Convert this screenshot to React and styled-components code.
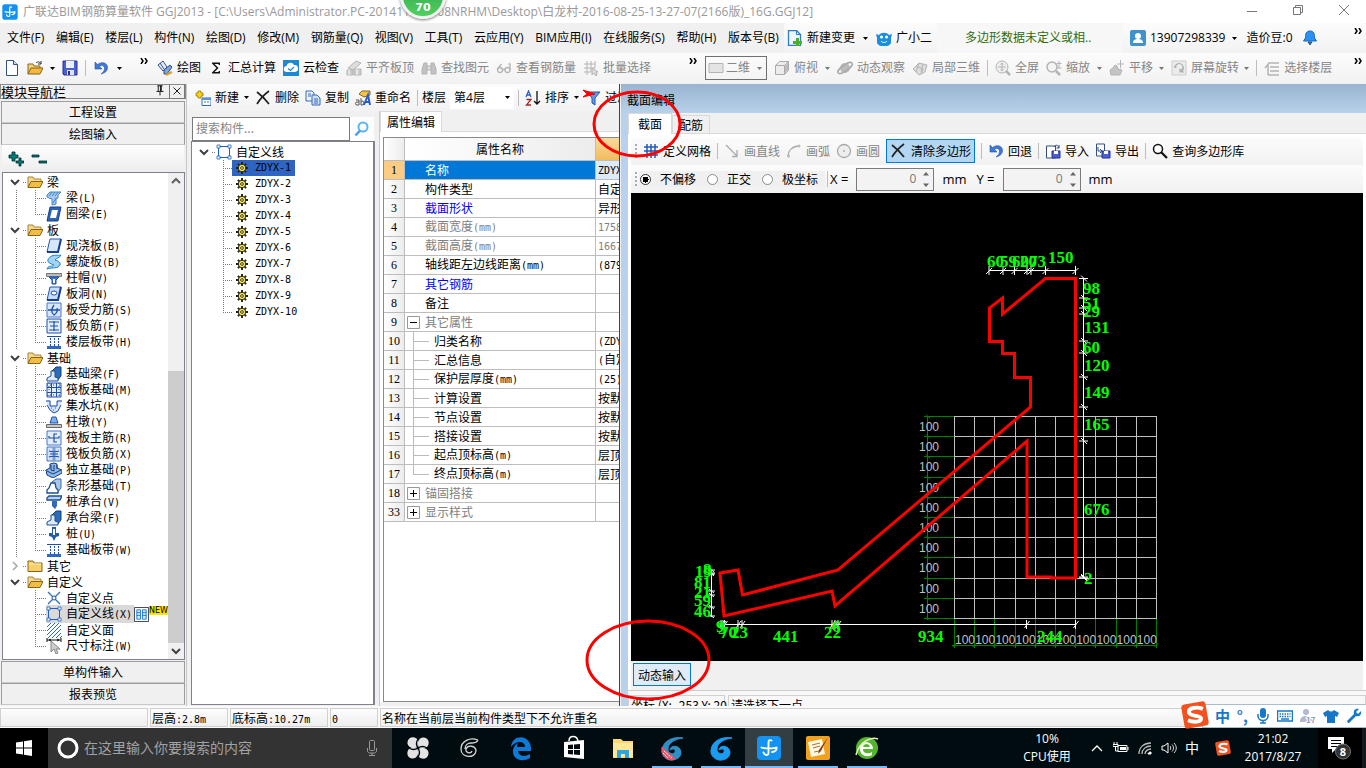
import React from "react";
import styled, { createGlobalStyle, css } from "styled-components";

const UI = `"Open Sans", "Noto Sans CJK SC", sans-serif`;
const SONG = `"Noto Sans CJK SC", sans-serif`;

const Global = createGlobalStyle`
  * { box-sizing: border-box; }
  body { margin: 0; background: #f0f0f0; font-family: ${UI}; font-size: 12px; line-height: 16px; color: #000; }
  button, input, select { font: inherit; color: inherit; margin: 0; padding: 0; border: 0; background: none; border-radius: 0; outline: 0; }
  ul { list-style: none; margin: 0; padding: 0; }
  svg { display: block; flex: none; }
`;

/* ---------- icons, drawn on a 16 x 16 grid ---------- */
const B = "#1f4fa8";
const L = "#a9c8f2";
const G = "#b4b4b4";
const icons = {
  newDoc: <><path d="M2.500.5h7l4 4v11h-11z" fill="#fff" stroke="#33507f" /><path d="M9.500.5v4h4" fill="#c9dcf7" stroke="#33507f" /></>,
  open: <><path d="M1 14V4h5l1 2h6v2" fill="#f6d27a" stroke="#8a6414" /><path d="M1 14l3-6h12l-3 6z" fill="#f4b73f" stroke="#8a6414" /><path d="M9 3c2-2 4-1 5 1m0-3v3h-3" fill="none" stroke="#333" /></>,
  save: <><path d="M1 1h14v14H2L1 14z" fill="#4a5fd0" stroke="#2a2f96" /><path d="M4 1h8v7H4z" fill="#e9effc" /><path d="M5 10h7v5H5z" fill="#dfe3f5" /><path d="M6 11h2v4H6z" fill="#2a2f96" /></>,
  undo: <path d="M2 2v7h7L6.500 6.500C9 4.500 12 6 11.500 9c-.3 2-1.500 3.500-3.500 5 4-1 6.500-3 6.500-6.500C14.500 3 9 1 4.500 4.500z" fill="#3f78d8" stroke="#2454a8" strokeWidth=".6" />,
  pencil: <><path d="M1 5l5-4 4 6-4 4z" fill="#dfe9f7" stroke="#34558b" /><path d="M3 3l4 6" stroke="#34558b" /><path d="M7 10l6-5 2 2-5 7H7z" fill="#7fa6dd" stroke="#2b4b82" /><path d="M9 15l6-3" stroke="#e0a020" strokeWidth="2" /></>,
  sigma: <path d="M12 5V2.500H4v1L8.500 8 4 12.500v1h8V11h-1l-.7 1H6.500L10.500 8 6.500 4h3.800l.7 1z" fill="#111" />,
  cloud: <><path d="M0 0h16v16H0z" fill="#1e88d2" /><path d="M4 12a3 3 0 01-.5-6A4 4 0 0111 5a3.500 3.500 0 011 7z" fill="#fff" /><path d="M5 8.500l2.500 2L11 7" fill="none" stroke="#1e88d2" strokeWidth="1.300" /></>,
  slab: <><path d="M2 8l8-7 5 2-8 7z" fill="#ddd" stroke={G} /><path d="M1 10h6v5H1zM8 9h7v6H8z" fill="#ccc" stroke={G} /><path d="M3 10v5M11 9v6" stroke="#fff" /></>,
  binoc: <><path d="M1 14V9l2-6h3v11zM15 14V9l-2-6h-3v11z" fill="#c2c2c2" stroke={G} /><path d="M6 6h4v4H6z" fill="#ddd" stroke={G} /></>,
  glasses: <><circle cx="4" cy="10" r="2.500" fill="none" stroke={G} strokeWidth="1.300" /><circle cx="11.500" cy="10" r="2.500" fill="none" stroke={G} strokeWidth="1.300" /><path d="M6.500 9.500H9M1.500 9l4-5M14 10V4h-1.500" stroke={G} fill="none" strokeWidth="1.300" /></>,
  batch: <><path d="M1 4h11M1 8h11M1 12h7M4 1v14M8 1v11M12 1v7" stroke={G} /><path d="M9 8v7l2-2 2 3 1-1-1-3h2z" fill="#ddd" stroke={G} /></>,
  flat: <path d="M1 3.500h14v9H1z" fill="#e4e4e4" stroke={G} />,
  cube: <><path d="M1.500 5.500l4-4h9v9l-4 4h-9z" fill="#ececec" stroke="#aaa" /><path d="M1.500 5.500h9v9M10.500 5.500l4-4" fill="none" stroke="#aaa" /><path d="M11 6l3-3v7l-3 3z" fill="#bbb" /></>,
  orbit: <><circle cx="8" cy="8" r="5" fill="#bbb" /><ellipse cx="8" cy="8" rx="8.500" ry="3" transform="rotate(-35 8 8)" fill="none" stroke="#aaa" strokeWidth="1.500" /></>,
  part3d: <><path d="M1 9l6-6 8 2-2 7-6 3z" fill="#ddd" stroke={G} /><path d="M4 6l7 3-2 5M7 3l-3 9M11 4l-2 8" fill="none" stroke={G} /></>,
  full: <><circle cx="7" cy="7" r="6" fill="#efefef" stroke={G} /><path d="M7 3v8M3 7h8M5.500 4.500L7 3l1.500 1.500M5.500 9.500L7 11l1.500-1.500" fill="none" stroke={G} /><path d="M11 11l4 4" stroke={G} strokeWidth="2.500" /></>,
  zoomI: <><circle cx="6" cy="7" r="5" fill="#f4f4f4" stroke={G} strokeWidth="1.500" /><path d="M10 11l4 4" stroke={G} strokeWidth="2.500" /><path d="M13 1v7M10.500 3.500h5M10.500 8h5" stroke={G} /></>,
  pan: <><path d="M2 15l-1-5 3-2 2-3 2 1 1 3 4 1-2 5z" fill="#c4c4c4" stroke={G} /><path d="M11.500 0v8M8 4h7" stroke={G} /></>,
  rotate: <><path d="M1 1h14v14H1z" fill="#ececec" stroke="#ccc" /><path d="M3 8a5 5 0 119 3l1.500 1.500H8.500V8L10 9.500A3 3 0 105.500 8z" fill="#b0b0b0" /></>,
  floors: <path d="M4 3h11M6 7h9M6 11h9M4 15h11M1 8l4-5M4 4v11" fill="none" stroke={G} strokeWidth="1.500" />,
  add: <><path d="M3 1h3v2h2v3H6v2H3V6H1V3h2z" fill="#f7d21e" stroke="#8c6d00" strokeWidth=".7" /><path d="M7 8h9v7.500H7z" fill="#fff" stroke="#3669b8" /><path d="M7 8h9v2H7z" fill="#5b92dd" /><path d="M9 12h2m1 0h2" stroke="#3669b8" /></>,
  del: <path d="M2 2c4 3 8 7 12 12M14 1C10 4 5 9 2 14" stroke="#222" strokeWidth="1.700" fill="none" />,
  copy: <><path d="M1 1h6l2 2v8H1z" fill="#eaf2fd" stroke="#3669b8" /><path d="M7 5h5l3 3v7H7z" fill="#cfe1fa" stroke="#3669b8" /><path d="M9 9h4m-4 2h4m-4 2h4M3 4h3M3 6h3" stroke="#3669b8" /></>,
  rename: <><path d="M4 4l3-3h8v4L9 7z" fill="#f0c54a" stroke="#8a6414" /><path d="M9 15l4-10 2 10m-5-3h5" stroke="#2c5fc4" strokeWidth="2" fill="none" /><path d="M1 10h3v5H2a1.500 1.500 0 010-3h2M6 8v7h1a2 2 0 000-4H6" stroke="#555" fill="none" /></>,
  sort: <><path d="M1 7l2.500-6L6 7M2 5h3" stroke="#2c5fc4" strokeWidth="1.300" fill="none" /><path d="M1.500 9.500H6L1.500 15H6" stroke="#a02828" strokeWidth="1.300" fill="none" /><path d="M12 1v13m-3-3l3 3 3-3" stroke="#111" strokeWidth="1.300" fill="none" /></>,
  filter: <path d="M2 2h13l-5 6v7l-3-2V8z" fill="#5e9bea" stroke="#2b55a5" />,
  find: <><circle cx="9" cy="6" r="4.500" fill="#fff" stroke="#58b5f2" strokeWidth="2" /><path d="M6 9.500l-4.500 5" stroke="#4e9ede" strokeWidth="2.500" /></>,
  grid: <path d="M1 4h14M1 8h14M1 12h14M4 1v14M8 1v14M12 1v14" stroke="#2558b8" strokeWidth="1.500" />,
  line: <path d="M2 2l11 11M13 7v6.500H8" stroke="#aaa" strokeWidth="1.300" fill="none" />,
  arc: <><path d="M2 14C2 7 7 3 13 3" fill="none" stroke="#aaa" strokeWidth="1.300" /><circle cx="2.500" cy="13" r="1.500" fill="#bbb" /><circle cx="13" cy="3" r="1.500" fill="#bbb" /></>,
  circle: <><circle cx="8" cy="8" r="6.500" fill="#eee" stroke="#aaa" strokeWidth="1.300" /><circle cx="8" cy="8" r="1" fill="#aaa" /></>,
  import: <><path d="M1.500 3v12h9V3z" fill="#fff" stroke="#33507f" /><path d="M7 8h8v7H7z" fill="#4a5fd0" stroke="#2a2f96" /><path d="M9 8h4v3H9z" fill="#fff" /><path d="M9 4c2-3 4-2 5 1m0-3v3h-2.500" fill="none" stroke="#33507f" /></>,
  export: <><path d="M1.500 1h8v12h-8z" fill="#fff" stroke="#33507f" /><path d="M7 8h8v7H7z" fill="#4a5fd0" stroke="#2a2f96" /><path d="M9 8h4v3H9z" fill="#fff" /><path d="M3 4v4h3M5 6l2 2-2 2" fill="none" stroke="#33507f" /></>,
  query: <><circle cx="6" cy="6" r="4.500" fill="#fff" stroke="#111" strokeWidth="1.500" /><path d="M9 9l6 6" stroke="#111" strokeWidth="2.200" /></>,
  docPlus: <><path d="M1.500.5h8l4 4v11h-12z" fill="#eef6ff" stroke="#2d7cc4" strokeWidth="1.300" /><path d="M9.500.5v4h4" fill="none" stroke="#2d7cc4" /><path d="M9 8h3v3h3v3h-3v2H9v-2H6v-3h3z" fill="#4caf2a" /></>,
  mascot: <><path d="M0 4l3 1c2-3 8-3 10 0l3-1-1 4v5c-1 2-3 3-4 3H5c-1 0-3-1-4-3V8z" fill="#1c8ee0" /><circle cx="5.500" cy="7" r="1.500" fill="#fff" /><circle cx="10.500" cy="7" r="1.500" fill="#fff" /><path d="M5 11c2 2 4 2 6 0" stroke="#fff" fill="none" /></>,
  user: <><rect width="16" height="16" rx="2" fill="#3f93cc" /><circle cx="8" cy="6" r="3" fill="#fff" /><path d="M3 13c0-3 2-4 5-4s5 1 5 4z" fill="#fff" /></>,
  bell: <><path d="M8 1c4 0 4.500 3 4.500 7l2 3h-13l2-3C3.500 4 4 1 8 1z" fill="#2a90f5" stroke="#1766bd" /><path d="M6 12h4l-2 3z" fill="#2a90f5" stroke="#111" strokeWidth=".6" /></>,
  folderOpen: <><path d="M1 13V3h5l1 2h7v3" fill="#f4d991" stroke="#a88434" /><path d="M1 13.500l3-6h12l-3 6z" fill="#f2bd45" stroke="#8a6414" /></>,
  folder: <><path d="M1 13.500V3h5l1 2h8v8.500z" fill="#f6cf69" stroke="#8a6414" /><path d="M2 6h12" stroke="#fff0bd" /></>,
  beam: <><path d="M1 5l3-3h11l-3 3v3l-2 1v5l-4 1V9L3 8 1 7z" fill={L} stroke="#3d85c8" /><path d="M3 6l3-4M6 6l3-4M9 6l3-4M7 13l3-5" stroke="#3d85c8" /></>,
  ring: <><path d="M4 1h11l-3 14H1z" fill="#2d64b8" stroke="#183f86" /><path d="M6 4h6l-2 8H4z" fill="#fff" /></>,
  plate: <><path d="M4 1h11l-3 13H1z" fill="#d6e7fc" stroke="#2456a8" /><path d="M1 14h11l3-13" fill="none" stroke="#163f8d" strokeWidth="2" /></>,
  spiral: <path d="M4 3c4-3 8-1 11-2-1 3-5 3-6 5 3 1 6 2 5 5-2 4-7 2-13 4 1-4 6-2 7-4C6 10 1 9 2 6c0-1 1-2 2-3z" fill="#9fd4f4" stroke="#2382c4" />,
  cap: <><path d="M.500 3.500h15v3H.5z" fill="#bdbdbd" stroke="#777" /><path d="M3 7h10l-3 3v4H6v-4z" fill="#3c7dd0" stroke={B} /><path d="M7 9h2v4H7z" fill="#fff" /></>,
  hole: <><path d="M4 1h11l-3 13H1z" fill="#c7dcf8" stroke="#2456a8" /><path d="M1 14h11l3-13" fill="none" stroke="#163f8d" strokeWidth="2" /><ellipse cx="8" cy="7" rx="3" ry="2" fill="#fff" stroke={B} /></>,
  rebarS: <><path d="M1 1h14v14H1z" fill="#d8e6fb" stroke="#4a77c4" /><path d="M2 8h12M8 3c-3 4-3 8 0 10 3-2 4-4 3-7" fill="none" stroke={B} strokeWidth="1.300" /></>,
  rebarF: <><path d="M1 1h14v14H1z" fill="#e2edfd" stroke={B} /><path d="M8 3v10M3 4h10M3 12h10M4 8h8" stroke={B} strokeWidth="1.200" /></>,
  rebarX: <><path d="M1 1h14v14H1z" fill="#d2e1f8" stroke="#4a77c4" /><path d="M8 1v14" stroke="#7f9fd4" strokeWidth="3" /><path d="M3 5c2 1 8 1 10 0M3 11c2-1 8-1 10 0M4 8h8" stroke={B} strokeWidth="1.200" fill="none" /></>,
  band: <><path d="M1 2.500h14" stroke={B} /><path d="M4.500 4v8M8.500 4v8M12.500 4v8" stroke={B} strokeDasharray="2 1" /><path d="M1 12h14v3H1z" fill="#2e68c2" /></>,
  fbeam: <><path d="M6 5l4-4h5v9l-4 5z" fill="#2e6cb4" stroke="#163f7c" /><path d="M1 15v-3l4-2V5h4v6l3 1v3z" fill="#dbe9fb" stroke="#1d4d94" /></>,
  raft: <><path d="M1 1h14v14H1z" fill="#e2edfd" stroke={B} /><path d="M5.500 1v14M10.500 1v14M1 5.500h14M1 10.500h14" stroke={B} /><path d="M3 1v14M13 1v14M1 3h14M1 13h14" stroke={B} strokeDasharray="1 2" /></>,
  pit: <><path d="M0 2h5v5h6V2h5l-2 8-4 5H6l-4-5z" fill="#d4e5fb" /><path d="M0 3h4v5h7V3h5M1 7l3 5 4 3 4-2 3-6" fill="none" stroke={B} /><path d="M5 10h1m3 0h1m-3 2h1" stroke={B} /></>,
  pier: <><path d="M6 3h4l2 6H4z" fill="#7faee8" stroke={B} /><path d="M.500 10.500h15v3H.5z" fill="#c8c8c8" stroke="#666" /></>,
  mainbar: <><path d="M1 1h14v14H1z" fill="#e2edfd" stroke="#4a77c4" /><path d="M3 6v2h10V6M11 4H8v8h3" fill="none" stroke={B} strokeWidth="1.200" /></>,
  indep: <><path d="M0 8l4-2V2l4-1 3 1v4l5 2v3l-9 5-6-3z" fill="#8db9ea" stroke="#143f7c" /><path d="M5 3v5l3 1V3M1 9l6 3 8-4M11 3v4" fill="none" stroke="#143f7c" /></>,
  strip: <><path d="M6 4l4-3h5v9l-4 5z" fill="#a9c8e8" stroke="#3b6ba8" /><path d="M1 15v-3l2-2 2-5h4l1 5 2 2v3z" fill="#fff" stroke="#1d4d94" strokeWidth="1.300" /></>,
  capP: <><path d="M1 4l2-2h13l-2 4H1z" fill="#b7d3f4" stroke="#1d4d94" strokeWidth="1.300" /><path d="M6 7h5v5l-2 3-3-3z" fill="#3169b5" /></>,
  pile: <><path d="M6 1h4v6h3v3l-3 1-2 4-2-4-3-1V7h3z" fill="#245ca8" /><path d="M7 3h2v6H7z" fill="#fff" /></>,
  point: <><path d="M2 2l12 12M14 2L2 14" stroke="#2b72b8" strokeWidth="1.300" /><circle cx="8" cy="8" r="2" fill="#fff" stroke={B} /></>,
  lineBox: <><path d="M2.500 2.500h11v11h-11z" fill="none" stroke="#1d5fc4" /><path d="M1 1h3v3H1zM12 1h3v3h-3zM1 12h3v3H1zM12 12h3v3h-3z" fill="#fff" stroke="#1d5fc4" strokeWidth=".8" /></>,
  face: <path d="M1 5l4-4M1 9l8-8M1 13L13 1M2 16L15 3M6 16l9-9M10 16l5-5M14 16l2-2" stroke="#2b63c8" strokeWidth="1" />,
  dim: <><path d="M1 2h14M1 0v4M15 0v4M5 1l-2 1 2 1M11 1l2 1-2 1" stroke="#111" fill="none" /><path d="M5 3v11l3-3 2 5 2-1-2-4h4z" fill="#ccc" stroke="#888" /></>,
  cols: <><path d="M.500.5h15v15H.5z" fill="#fff" stroke="#3a3a52" /><path d="M3 3h4v10H3zM9 3h4v10H9z" fill="#d3e9ff" stroke="#1f7ad4" /><path d="M3 6h4m-4 3h4m2-3h4M9 9h4" stroke="#1f7ad4" /></>,
  gear: <><path d="M8 0v16M0 8h16M2.500 2.500l11 11M13.500 2.500l-11 11" stroke="#222" strokeWidth="2.600" /><circle cx="8" cy="8" r="5" fill="#ffe92e" stroke="#222" strokeWidth="1.300" /><circle cx="8" cy="8" r="1.800" fill="#fff" stroke="#222" strokeWidth="1.200" /></>,
  chevD: <path d="M4 6l4 4 4-4" fill="none" stroke="#404040" strokeWidth="2" />,
  chevU: <path d="M4 10l4-4 4 4" fill="none" stroke="#606060" strokeWidth="2" />,
  chevR: <path d="M6 4l4 4-4 4" fill="none" stroke="#a6a6a6" strokeWidth="1.500" />,
  plus2: <><path d="M4 1h3v3h3v3H7v3H4V7H1V4h3z" fill="#007d78" stroke="#002a28" strokeWidth=".8" /><path d="M11 7h2v3h3v2h-3v3h-2v-3H8v-2h3z" fill="#007d78" stroke="#002a28" strokeWidth=".8" /></>,
  minus2: <path d="M1 4h7v2H1zM8 10h8v2H8z" fill="#007d78" stroke="#002a28" strokeWidth=".8" />,
  pin: <path d="M5 2h6M6 2v6M9.500 2v6M8.500 2v6M4 8.500h8M8 9v4" stroke="#000" fill="none" />,
  close: <path d="M4 4l8 8M12 4l-8 8" stroke="#000" />,
  chevW: <path d="M3 11l5-5 5 5" fill="none" stroke="#fff" strokeWidth="1.300" />,
  battery: <><path d="M5 5.500h9v6H5z" fill="none" stroke="#fff" /><path d="M7 7h6v3H7z" fill="#fff" /><path d="M15 7v3" stroke="#fff" /><path d="M1 2v2m3-2v2M0 4.500h5v2H0zM2.500 7v4H5" stroke="#fff" fill="none" /></>,
  wifi: <><path d="M2 14C2 7 7 3 14 3M5 14c0-5 4-8 9-8M8 14c0-3 3-5 6-5" stroke="#bbb" fill="none" strokeWidth="1.300" /><path d="M11 14c0-1 1-2 3-2v2z" fill="#fff" stroke="#fff" /></>,
  sound: <><path d="M1 6h2l4-3v10l-4-3H1z" fill="none" stroke="#fff" /><path d="M9 6c1 1 1 3 0 4M11 4.500c2 2 2 5 0 7M13 3c3 3 3 7 0 10" stroke="#ddd" fill="none" /></>,
  sogou: <><rect x="1" y="1" width="14" height="14" rx="2" fill="#f4511e" transform="rotate(-10 8 8)" /><path d="M12.500 4.500C9 3 4 4 4.500 6.500S11.500 8 11.500 10s-4 2.500-7.500 1" stroke="#fff" strokeWidth="2.200" fill="none" /></>,
  mic: <><rect x="5" y="0" width="6" height="10" rx="3" fill="#1878c8" /><path d="M3 6v2c0 6 10 6 10 0V6M8 12v3M5 15h6" stroke="#1878c8" strokeWidth="1.500" fill="none" /></>,
  micLine: <><rect x="5.500" y=".5" width="5" height="10" rx="1" fill="none" stroke="#999" /><path d="M3.500 8v3c0 1 1 2 2 2h5c1 0 2-1 2-2V8M8 13v2.500M5 15.500h6" stroke="#999" fill="none" /></>,
  keyb: <><path d="M.500 3h15v10H.5z" fill="#fff" stroke="#1878c8" strokeWidth="1.500" /><path d="M2.500 6h11M2.500 8.500h11" stroke="#1878c8" strokeWidth="1.500" strokeDasharray="1.500 1" /><path d="M4 11h8" stroke="#1878c8" strokeWidth="1.500" /></>,
  person: <><circle cx="6" cy="4" r="3" fill="#b0b9cf" /><path d="M0 14c0-5 3-6 6-6s6 1 6 6z" fill="#b0b9cf" /><text x="6" y="15" fontSize="8" fontWeight="700" fill="#8f9bb8" stroke="#fff" strokeWidth="2" paintOrder="stroke">17</text></>,
  shirt: <path d="M5 2c2 2 4 2 6 0l5 3-2 4-2-1v7H4V8L2 9 0 5z" fill="#1878c8" />,
  wrench: <path d="M2 15l-1-2 7-7c-1-3 1-6 5-5l-3 3 2 2 3-3c1 4-2 6-5 5l-7 7z" fill="#1878c8" />,
};

const Icon = ({ n, s = 16 }) => (
  <svg width={s} height={s} viewBox="0 0 16 16" aria-hidden="true">{icons[n]}</svg>
);

const Arrow = ({ c = "#000" }) => (
  <svg width="5" height="3" viewBox="0 0 5 3" aria-hidden="true"><path d="M0 0h5L2.500 3z" fill={c} /></svg>
);
const More = () => (
  <svg width="8" height="6" viewBox="0 0 8 6" aria-hidden="true"><path d="M1 0l2 3-2 3M5 0l2 3-2 3" fill="none" stroke="#000" strokeWidth="1.500" /></svg>
);

/* ---------- text with half-width latin ---------- */
const Half = styled.span`
  font-family: "DejaVu Sans Mono", monospace;
  font-size: 10px;
`;
const Song = ({ children }) =>
  children.split(/([\x20-\x7e]+)/).filter(Boolean).map((t, i) =>
    /^[\x20-\x7e]/.test(t) ? <Half key={i}>{t}</Half> : t
  );

/* ---------- frame ---------- */
const Page = styled.div`
  position: relative;
  min-height: 100vh;
  display: flex;
  flex-direction: column;
  overflow: hidden;
`;
const TitleBar = styled.header`
  display: flex;
  align-items: center;
  height: 23px;
  padding: 0 14px 0 1px;
  background: #fff;
  color: #999;
  white-space: pre;
`;
const TitleText = styled.span`
  flex: 1;
  padding-left: 4px;
`;
const WindowButtons = styled.div`
  display: flex;
  gap: 30px;
  padding-bottom: 3px;
`;
const Bar = styled.div`
  display: flex;
  align-items: center;
  height: ${(p) => p.$h}px;
  background: ${(p) => (p.$plain ? "#f0f0f0" : "linear-gradient(#fdfdfd, #f1f1f1)")};
  white-space: nowrap;
`;
const Menu = styled.nav`
  display: flex;
  justify-content: space-between;
  padding: 0 5px 0 7px;
  width: 784px;
`;
const MenuButton = styled.button`
  white-space: nowrap;
`;
const Cluster = styled.div`
  display: flex;
  align-items: center;
  height: 100%;
  gap: ${(p) => p.$gap || 7}px;
  padding: 0 ${(p) => p.$r || 0}px 0 ${(p) => p.$l || 0}px;
  ${(p) => (p.$w ? css`width: ${p.$w}px;` : "flex: 1;")}
  flex-shrink: 0;
  min-width: 0;
  border-radius: 3px;
  background: linear-gradient(#fcfcfc, #f2f2f2);
`;
const Push = styled.span`
  flex: 1;
`;
const High = styled.span`
  padding-bottom: 14px;
`;
const Tool = styled.button`
  display: flex;
  align-items: center;
  gap: 4px;
  height: 24px;
  flex: none;
  white-space: nowrap;
  color: ${(p) => (p.$off ? "#868686" : "#000")};
  ${(p) => p.$boxed && css`border: 1px solid #707070; padding: 0 4px 0 2px; gap: 2px;`}
  ${(p) => p.$active && css`border: 1px solid #0078d7; background: #b3d7f3; padding: 0 3px; gap: 5px;`}
`;
const Tail = styled.span`
  padding-left: ${(p) => p.$l}px;
`;
const Sep = styled.span`
  flex: none;
  width: 1px;
  height: 16px;
  background: #bdbdbd;
`;
const Notice = styled.span`
  width: 186px;
  padding-left: 28px;
  background: #f7f7f7;
  line-height: 30px;
  color: #2f6b0c;
`;

const Workspace = styled.main`
  flex: 1;
  display: flex;
  min-height: 0;
  padding-top: 1px;
`;

/* ---------- navigation ---------- */
const Nav = styled.aside`
  width: 187px;
  flex: none;
  display: flex;
  flex-direction: column;
  padding-bottom: 1px;
  border-right: 1px solid #c8c8c8;
  font-family: ${SONG};
`;
const NavHead = styled.div`
  display: flex;
  align-items: center;
  height: 15px;
  margin-bottom: 2px;
  border: 1px solid #8c8c8c;
  font-size: 13px;
`;
const HeadIcons = styled.span`
  display: flex;
  margin-left: auto;
  gap: 2px;
`;
const CloseBox = styled.button`
  border: 1px solid #777;
  border-width: 0 1px 1px 1px;
`;
const NavButton = styled.button`
  height: 22px;
  margin: 0 1px;
  border: 1px solid #9c9c9c;
  border-bottom-color: #c8c8c8;
  background: #f0f0f0;
`;
const NavTools = styled.div`
  display: flex;
  align-items: center;
  gap: 7px;
  height: 27px;
  margin: 0 2px;
  padding-left: 6px;
  background: linear-gradient(#fefefe, #ededed);
`;
const TreeBox = styled.div`
  flex: 1;
  display: flex;
  margin: 0 1px 1px 2px;
  border: 1px solid #7f828c;
  background: #fff;
`;
const Tree = styled.ul`
  flex: 1;
  min-width: 0;
  overflow: hidden;
  padding-top: 1px;
`;
const Row = styled.li`
  display: flex;
  align-items: center;
  height: 16px;
  white-space: nowrap;
`;
const dotsV = "repeating-linear-gradient(to bottom, #777 0 1px, transparent 1px 2px)";
const dotsH = "repeating-linear-gradient(to right, #777 0 1px, transparent 1px 2px)";
const Trunk = styled.span`
  flex: none;
  width: 19px;
  height: 16px;
  margin-left: 13px;
  background: ${(p) => (p.$off ? "none" : `${dotsV} 0 0 / 1px 100% no-repeat`)};
`;
const Elbow = styled.span`
  flex: none;
  width: 11px;
  height: 16px;
  background: ${(p) => `${dotsV} 0 0 / 1px ${p.$last ? "50%" : "100%"} no-repeat, ${dotsH} 0 50% / 100% 1px no-repeat`};
`;
const Stub = styled.span`
  width: 4px;
  height: 16px;
  background: ${dotsH} 0 50% / 100% 1px no-repeat;
`;
const Chevron = styled.span`
  padding-left: 4px;
`;
const Label = styled.span`
  padding: 0 2px 0 4px;
`;
const Picked = styled.span`
  display: flex;
  align-items: center;
  flex: none;
  background: ${(p) => (p.$on ? "#d9d9d9" : "none")};
`;
const NewTag = styled.span`
  align-self: flex-start;
  background: #ffe600;
  font: 8px/9px "DejaVu Sans", sans-serif;
`;
const Scroll = styled.div`
  display: flex;
  flex-direction: column;
  flex: none;
  width: 16px;
  background: #f0f0f0;
`;
const Track = styled.div`
  flex: ${(p) => p.$n};
  background: ${(p) => (p.$thumb ? "#cdcdcd" : "#f0f0f0")};
`;

/* ---------- component list ---------- */
const Middle = styled.section`
  width: 433px;
  flex: none;
  display: flex;
  flex-direction: column;
  border-right: 1px solid #3c4654;
  overflow: hidden;
  margin-right: 1px;
`;
const Columns = styled.div`
  flex: 1;
  display: flex;
  min-height: 0;
`;
const ListPane = styled.div`
  width: 184px;
  margin-left: 4px;
  flex: none;
  display: flex;
  flex-direction: column;
  padding-bottom: 1px;
  font-family: ${SONG};
`;
const SearchRow = styled.form`
  display: flex;
  height: 30px;
  padding: 6px 1px 0;
`;
const SearchInput = styled.input`
  width: 158px;
  height: 24px;
  padding: 0 3px 4px;
  border: 1px solid #7a7a7a;
  background: #fff;
  &::placeholder { color: #858585; opacity: 1; }
`;
const SearchButton = styled.button`
  flex: 1;
  display: grid;
  place-items: center;
  background: #fdfdfd;
`;
const ListBox = styled.ul`
  flex: 1;
  padding: 2px 0 0 4px;
  border: 1px solid #7f828c;
  border-right-width: 2px;
  background: #fff;
`;
const ListElbow = styled(Elbow)`
  width: 9px;
  margin-left: 27px;
`;
const ListItem = styled.span`
  display: flex;
  align-items: center;
  height: 16px;
  padding: 0 4px;
  gap: 7px;
  background: ${(p) => (p.$on ? "#2f65c0" : "none")};
`;
const FloorSelect = styled.select`
  width: 50px;
  height: 22px;
  padding-left: 4px;
  appearance: none;
  background: #fff;
`;
const ComboBox = styled.label`
  display: flex;
  flex: none;
  align-items: center;
  gap: 4px;
`;
const ComboFace = styled.span`
  display: flex;
  align-items: center;
  gap: 5px;
  width: 64px;
  background: #fff;
`;

/* ---------- property editor ---------- */
const Props = styled.div`
  flex: 1;
  min-width: 0;
  display: flex;
  flex-direction: column;
  margin-left: 4px;
  padding-bottom: 4px;
  border-left: 1px solid #c9c9c9;
  background: #f0f0f0;
  font-family: ${SONG};
  overflow: hidden;
`;
const TabStrip = styled.div`
  display: flex;
  align-items: flex-end;
  height: 21px;
  border-bottom: 1px solid #d9d9d9;
`;
const Tab = styled.button`
  width: ${(p) => p.$w}px;
  height: ${(p) => (p.$on ? 21 : 18)}px;
  margin-bottom: ${(p) => (p.$on ? -1 : 0)}px;
  border: 1px solid #d9d9d9;
  border-bottom: 0;
  background: ${(p) => (p.$on ? "#fff" : "#f0f0f0")};
`;
const PropBody = styled.div`
  flex: 1;
  padding: 5px 0 0 3px;
  background: #fff;
  overflow: hidden;
`;
const PropFrame = styled.div`
  height: 100%;
  border: 1px solid #8a8a8a;
  border-right: 0;
  overflow: hidden;
`;
const Table = styled.table`
  width: 336px;
  table-layout: fixed;
  border-collapse: separate;
  border-spacing: 0;
`;
const Th = styled.th`
  height: ${(p) => (p.$top ? 23 : 19)}px;
  padding: 0;
  border-right: 1px solid #bdbdbd;
  border-bottom: 1px solid #bdbdbd;
  font-weight: 400;
  background: ${(p) => p.$bg || "linear-gradient(90deg, #fff, #ececec)"};
  ${(p) => !p.$top && css`font-family: "Liberation Serif", serif; line-height: 14px;`}
`;
const Td = styled.td`
  height: 19px;
  padding: 0 0 0 ${(p) => p.$l || 2}px;
  border-right: 1px solid #bdbdbd;
  border-bottom: 1px solid #bdbdbd;
  line-height: 16px;
  white-space: nowrap;
  overflow: hidden;
  color: ${(p) => p.$c || "#000"};
  background: ${(p) => p.$bg || "#fff"};
`;
const Cell = styled.span`
  display: flex;
  align-items: center;
  height: 18px;
  gap: 5px;
`;
const Branch = styled.span`
  width: 16px;
  height: 18px;
  background: linear-gradient(#bbb, #bbb) 0 0 / 1px ${(p) => (p.$last ? "50%" : "100%")} no-repeat, linear-gradient(#bbb, #bbb) 0 50% / 100% 1px no-repeat;
`;

/* ---------- section dialog ---------- */
const Dialog = styled.section`
  flex: 1;
  min-width: 0;
  display: flex;
  flex-direction: column;
  background: #b9d1ea;
  font-family: ${SONG};
`;
const DialogTitle = styled.h2`
  margin: 0;
  height: 29px;
  padding: 8px 0 0 6px;
  font: 400 12px/18px ${UI};
  background: linear-gradient(#99b4d1, #b9d1ea);
`;
const DialogBody = styled.div`
  flex: 1;
  display: flex;
  flex-direction: column;
  margin-left: 7px;
  background: #f0f0f0;
`;
const Sheet = styled.div`
  flex: 1;
  display: flex;
  flex-direction: column;
  padding: 3px 3px 0 3px;
  background: #fff;
`;
const ToolRow = styled.div`
  display: flex;
  align-items: center;
  gap: ${(p) => p.$gap}px;
  height: 28px;
  padding-left: 4px;
  white-space: nowrap;
  background: linear-gradient(#fcfcfc, #f1f1f1);
`;
const Grip = styled.span`
  width: 2px;
  height: 14px;
  background: repeating-linear-gradient(#aaa 0 2px, transparent 2px 4px);
`;
const Radio = styled.label`
  display: flex;
  align-items: center;
  gap: 9px;
  input {
    appearance: none;
    width: 11px;
    height: 11px;
    border: 1px solid #8a8a8a;
    border-radius: 50%;
    background: #fff;
  }
  input:checked {
    border-color: #333;
    background: radial-gradient(#000 0 3px, #fff 3px);
  }
`;
const Radios = styled.div`
  display: flex;
  gap: 11px;
  padding: 0 7px 0 1px;
  background: #f0f0f0;
`;
const NumLabel = styled.label`
  display: flex;
  align-items: center;
  gap: 8px;
  font: 13px/16px ${UI};
`;
const NumBox = styled.span`
  display: flex;
  align-items: center;
  width: 78px;
  height: 23px;
  padding-right: 4px;
  border: 1px solid #7a7a7a;
  background: #f3f3f3;
  color: #777;
  input { width: 59px; text-align: right; font-size: 12px; }
`;
const Spin = styled.svg`
  margin-left: auto;
`;
const Canvas = styled.div`
  flex: 1;
  min-height: 468px;
  overflow: hidden;
  background: #000;
`;
const DialogFoot = styled.div`
  height: 29px;
  padding: 2px;
  background: #f0f0f0;
`;
const DynButton = styled.button`
  width: 58px;
  height: 23px;
  border: 1px solid #0078d7;
  background: #dfebf6;
`;
const DialogStatus = styled.div`
  display: flex;
  gap: 3px;
  height: 16px;
  padding-top: 4px;
  border-top: 1px solid #ccc;
  background: #f8f8f8;
  overflow: hidden;
  span {
    height: 24px;
    padding: 0 2px;
    border: 1px solid #d0d0d0;
    line-height: 18px;
    white-space: nowrap;
  }
  span:first-child { width: 97px; }
  span:last-child { flex: 1; }
`;

/* ---------- status and task bar ---------- */
const StatusBar = styled.footer`
  display: flex;
  gap: 2px;
  height: 22px;
  padding: 2px 0 1px;
  background: #fafafa;
  font-family: ${SONG};
`;
const StatusCell = styled.span`
  ${(p) => (p.$w ? css`width: ${p.$w}px;` : "flex: 1;")}
  padding: 0 1px;
  border: 1px solid #cfcfcf;
  background: linear-gradient(#fdfdfd, #eee);
  line-height: 18px;
  white-space: nowrap;
`;
const TaskBar = styled.footer`
  display: flex;
  height: 40px;
  background: #000c10;
  color: #fff;
`;
const Start = styled.button`
  display: grid;
  place-items: center;
  width: 48px;
  background: #000;
`;
const TaskSearch = styled.label`
  display: flex;
  align-items: center;
  gap: 5px;
  width: 344px;
  padding: 0 12px 0 9px;
  background: #333;
  input { flex: 1; font-size: 14px; line-height: 20px; }
  input::placeholder { color: #a2a2a2; opacity: 1; }
`;
const Task = styled.button`
  display: grid;
  place-items: center;
  width: ${(p) => p.$w || 49}px;
  height: 40px;
  background: ${(p) => (p.$on ? "#333e42" : "none")};
  ${(p) => p.$run && css`
    background: linear-gradient(#76b9ff, #76b9ff) 50% 100% / 40px 2px no-repeat;
  `}
  ${(p) => p.$on && css`
    background: linear-gradient(#76b9ff, #76b9ff) 50% 100% / 48px 2px no-repeat, #333e42;
  `}
`;
const Tray = styled.div`
  display: flex;
  align-items: center;
  margin-left: auto;
`;
const TwoLine = styled.div`
  width: ${(p) => p.$w}px;
  text-align: center;
  line-height: 18px;
  white-space: nowrap;
`;
const TrayIcons = styled.div`
  display: flex;
  align-items: center;
  gap: 8px;
  width: 139px;
  margin-left: 9px;
`;
const Cjk = styled.span`
  font-size: 14px;
`;
const Notify = styled.button`
  display: grid;
  place-items: center;
  width: 48px;
  height: 40px;
  background: #000;
  border-right: 4px solid #14191b;
`;
const ImeBar = styled.div`
  position: absolute;
  right: 0;
  bottom: 40px;
  display: flex;
  align-items: center;
  justify-content: space-between;
  width: 164px;
  height: 24px;
  padding: 0 4px 0 12px;
  border: 1px solid #a9bdd0;
  border-right: 0;
  background: #fff;
  color: #1878c8;
  font: bold 15px/20px ${SONG};
`;
const ImeLogo = styled.div`
  position: absolute;
  right: 157px;
  bottom: 39px;
`;
const Badge = styled.div`
  position: absolute;
  left: 400px;
  top: -27px;
  width: 46px;
  height: 46px;
  padding-top: 25px;
  border: 3px solid #f2f2f2;
  border-radius: 50%;
  background: linear-gradient(#2f9e46, #50cf62);
  box-shadow: 0 1px 3px #777;
  color: #fff;
  text-align: center;
  font: bold 11px/14px "DejaVu Sans", sans-serif;
`;
const Marks = styled.svg`
  position: absolute;
  inset: 0;
  pointer-events: none;
`;

/* ---------- data ---------- */
const menus = ["文件(F)", "编辑(E)", "楼层(L)", "构件(N)", "绘图(D)", "修改(M)", "钢筋量(Q)", "视图(V)", "工具(T)", "云应用(Y)", "BIM应用(I)", "在线服务(S)", "帮助(H)", "版本号(B)"];

const navTree = [
  { name: "梁", items: [["beam", "梁(L)"], ["ring", "圈梁(E)"]] },
  { name: "板", items: [["plate", "现浇板(B)"], ["spiral", "螺旋板(B)"], ["cap", "柱帽(V)"], ["hole", "板洞(N)"], ["rebarS", "板受力筋(S)"], ["rebarF", "板负筋(F)"], ["band", "楼层板带(H)"]] },
  { name: "基础", items: [["fbeam", "基础梁(F)"], ["raft", "筏板基础(M)"], ["pit", "集水坑(K)"], ["pier", "柱墩(Y)"], ["mainbar", "筏板主筋(R)"], ["rebarX", "筏板负筋(X)"], ["indep", "独立基础(P)"], ["strip", "条形基础(T)"], ["capP", "桩承台(V)"], ["fbeam", "承台梁(F)"], ["pile", "桩(U)"], ["band", "基础板带(W)"]] },
  { name: "其它", closed: true, items: [] },
  { name: "自定义", end: true, items: [["point", "自定义点"], ["lineBox", "自定义线(X)", true], ["face", "自定义面"], ["dim", "尺寸标注(W)"]] },
];

const gray = "#808080";
const props = [
  ["1", "名称", "ZDYX-1", "#fff"],
  ["2", "构件类型", "自定义线"],
  ["3", "截面形状", "异形", "#00f"],
  ["4", "截面宽度(mm)", "1758", gray],
  ["5", "截面高度(mm)", "1667", gray],
  ["6", "轴线距左边线距离(mm)", "(879)"],
  ["7", "其它钢筋", "", "#00f"],
  ["8", "备注", ""],
  ["9", "其它属性", "", gray, "-"],
  ["10", "归类名称", "(ZDYX-1)", "", "b"],
  ["11", "汇总信息", "(自定义线)", "", "b"],
  ["12", "保护层厚度(mm)", "(25)", "", "b"],
  ["13", "计算设置", "按默认", "", "b"],
  ["14", "节点设置", "按默认", "", "b"],
  ["15", "搭接设置", "按默认", "", "b"],
  ["16", "起点顶标高(m)", "层顶标高", "", "b"],
  ["17", "终点顶标高(m)", "层顶标高", "", "e"],
  ["18", "锚固搭接", "", gray, "+"],
  ["33", "显示样式", "", gray, "+"],
];

const Fold = ({ open }) => (
  <svg width="13" height="13" viewBox="0 0 13 13" aria-hidden="true">
    <path d="M.500.5h12v12H.5z" fill="#fff" stroke="#999" />
    <path d={open ? "M3 6.500h7" : "M3 6.500h7M6.500 3v7"} stroke="#000" />
  </svg>
);

/* ---------- drawing ---------- */
const step = 20.2;
const eleven = Array.from({ length: 11 }, (_, i) => i);
const topTicks = [989, 1003, 1014.5, 1027, 1031, 1045.5, 1075.5];
const botTicks = [721, 723, 724.5, 738, 742, 832, 835, 838, 1026.5, 1075.5];
const rightTicks = [278.5, 298, 308, 314, 341, 353, 377, 407, 441, 577, 578];
const leftTicks = [570, 573, 574, 591, 595, 607, 616];
const dims = [
  [987, 267, "60"], [1000, 267, "59"], [1012, 267, "60"], [1020, 267, "20"], [1029, 267, "73"], [1048, 263, "150"],
  [1083, 294, "98"], [1083, 309, "51"], [1083, 317, "29"], [1084, 333, "131"], [1083, 353, "60"], [1084, 371, "120"], [1084, 398, "149"], [1084, 430, "165"], [1084, 515, "676"], [1084, 584, "2"],
  [695, 577, "19"], [703, 575, "8"], [694, 588, "81"], [694, 598, "21"], [694, 606, "59"], [694, 617, "46"],
  [716, 632, "9"], [718, 634, "5"], [720, 638, "70"], [731, 638, "23"], [773, 642, "441"], [824, 638, "22"], [832, 632, "6"], [918, 642, "934"], [1037, 642, "244"],
];
const Drawing = () => (
  <svg width="732" height="468" viewBox="631 193 732 468" role="img" aria-label="截面多边形">
    <g stroke="#c0c0c0">
      {eleven.map((i) => (
        <React.Fragment key={i}>
          <path d={`M${Math.round(954 + i * step) + 0.5} 416v202`} />
          <path d={`M954 ${Math.round(416 + i * step) + 0.5}h203`} />
        </React.Fragment>
      ))}
    </g>
    <g stroke="#008000">
      {eleven.map((i) => (
        <React.Fragment key={i}>
          <path d={`M${Math.round(954 + i * step) + 0.5} 619v29m-2-1l4-4`} />
          <path d={`M924 ${Math.round(416 + i * step) + 0.5}h30m-28-2l4 4`} />
        </React.Fragment>
      ))}
      <path d="M927.500 416v204M952 645.500h205" />
    </g>
    <g fill="#c0c0c0" fontFamily="Liberation Sans, sans-serif" fontSize="12">
      {eleven.slice(0, 10).map((i) => (
        <React.Fragment key={i}>
          <text x="919" y={431 + i * step}>100</text>
          <text x={955 + i * step} y="644">100</text>
        </React.Fragment>
      ))}
    </g>
    <path
      d="M1045.500 278.500H1075.500V578H1051V577H1027V441L835 606 832 591 724 616 720 573 738 570 742.500 595 838 570 1030.500 407V377.500H1014.500V353.500H1002.500V341.500H989.500V308L1002.500 298V314z"
      fill="none" stroke="#f00" strokeWidth="3"
    />
    <g stroke="#fff" fill="none">
      <path d="M989 270.500h87M720 624.500h356M1083.500 278v300M711.500 570v47" />
      {topTicks.map((x) => <path key={x} d={`M${x} 266v9m-3-1l6-6`} />)}
      {botTicks.map((x) => <path key={x} d={`M${x} 620v9m-2-1l5-7`} />)}
      {rightTicks.map((y) => <path key={y} d={`M1079 ${y}h9m-7-3l6 6`} />)}
      {leftTicks.map((y) => <path key={y} d={`M708 ${y}h7m-6-2l5 4`} />)}
    </g>
    <g fill="#0f0" fontFamily="Liberation Serif, serif" fontWeight="700" fontSize="17">
      {dims.map(([x, y, t]) => <text key={x + "-" + y} x={x} y={y}>{t}</text>)}
    </g>
  </svg>
);

/* ---------- task bar logos ---------- */
const swirl = "M25 4C15 2 5 7 4 16c-1 6 5 11 11 10 8-1 10-8 6-12-3-3-9-2-9 2 3-2 6-1 5 2-1 3-7 2-7-3 0-6 7-10 15-11z";
const logos = {
  fan: <g fill="#e4e4e4"><path d="M13 13.500C8 15 3 13 3.500 8S10 2 13 5s2 6 0 8.500z" /><path d="M14.500 13C13 8 15 3 20 3.500S26 10 23 13s-6 2-8.500 0z" /><path d="M15 14.500c5-1.500 10 .5 9.500 5.500S18 26 15 23s-2-6 0-8.500z" /><path d="M13.500 15c1.500 5-.5 10-5.500 9.500S2 18 5 15s6-2 8.500 0z" /><path d="M14 14c-2-3-2-6 0-9M14 14c3-2 6-2 9 0M14 14c2 3 2 6 0 9M14 14c-3 2-6 2-9 0" fill="none" stroke="#000c10" strokeWidth="1.300" /></g>,
  ghost: <path d="M23 6c-8-3-17 1-17 9 0 9 14 10 15 2 0-5-8-7-10-2-1 4 5 5 6 2M23 6c-1 3-4 3-7 3-3 0-6 2-6 6" fill="none" stroke="#d8d8d8" strokeWidth="1.300" />,
  edge: <path d="M4 13C5 0 23 0 24 14v3H11c1 6 7 6 12 3v4C14 29 5 25 6 16c1-4 3-6 5-7-1 2-1 3-1 4h8c0-6-9-7-14 0z" fill="#0d7ad8" />,
  store: <><path d="M4 8l20-2v19L4 23z" fill="#fff" /><path d="M9 7c0-6 8-6 9 0" fill="none" stroke="#fff" strokeWidth="1.500" /><path d="M8 11l5-.5V15H8zM14 10.500l6-.5v5h-6zM8 16h5v4.500L8 20zM14 16h6v5l-6-.5z" fill="#000c10" /></>,
  files: <><path d="M4 5h8l2 2h10v17H4z" fill="#fbd96f" /><path d="M4 9h20v14H4z" fill="#fde79a" /><path d="M8 24v-8h12v8h-4v-4h-4v4z" fill="#31a3dd" /></>,
  red: <><path d={swirl} fill="#2f8fc4" stroke="#2f8fc4" /><path d="M4 13l13 12c-7 3-14-3-13-12z" fill="#e8576b" stroke="#e8576b" /><path d="M6 17l8 7M5 19l5 5" stroke="#fff" strokeDasharray="2 1" /></>,
  blue: <path d={swirl} fill="#1b9cf0" stroke="#1b9cf0" />,
  ggj: <><rect x="2" y="2" width="24" height="24" rx="4" fill="#1492f2" /><path d="M16.500 6.500c-2-1-3 0-3 2V19c0 3-4 2.500-5-.5M6.500 13.500c2 1.200 13 1.200 15 0 .5 2.500-1.500 4.500-4.500 4.500" fill="none" stroke="#fff" strokeWidth="1.900" strokeLinecap="round" strokeLinejoin="round" /></>,
  note: <><rect x="2" y="2" width="24" height="24" rx="2" fill="#f2a11c" /><path d="M4 8l14-3 3 15-14 3z" fill="#fff8e4" /><path d="M8 11l8-2m-7 5l7-2m-6 6l5-1" stroke="#a5742a" /><path d="M24 3l-7 14-3 3 1-4z" fill="#8a3e12" /></>,
  e360: <><circle cx="14" cy="14" r="11" fill="#55b52f" /><path d="M20 15H10c0 5 6 5 9 3v3c-6 3-12 0-12-6 0-9 13-9 13 0zm-10-2h7c-1-4-6-4-7 0z" fill="#fff" /><path d="M3 21C6 8 18 2 25 5" fill="none" stroke="#dff3b0" strokeWidth="1.500" /></>,
};
const Logo = ({ n, s = 28 }) => <svg width={s} height={s} viewBox="0 0 28 28" aria-hidden="true">{logos[n]}</svg>;

const T = ({ i, t, off, arrow, ...rest }) => (
  <Tool $off={off} {...rest}>
    {i && <Icon n={i} />}
    {t && <span>{t}</span>}
    {arrow && <Tail $l={arrow}><Arrow c={off ? "#777" : "#000"} /></Tail>}
  </Tool>
);

const NumberField = ({ label }) => (
  <NumLabel>
    {label} =
    <NumBox>
      <input defaultValue="0" />
      <Spin width="6" height="15" viewBox="0 0 6 15"><path d="M0 3.500L3 0l3 3.500zM0 11.500h6L3 15z" fill="#666" /></Spin>
    </NumBox>
    <span>mm</span>
  </NumLabel>
);

export default function App() {
  return (
    <Page>
      <Global />
      <TitleBar>
        <Logo n="ggj" s={18} />
        <TitleText>{"广联达BIM钢筋算量软件 GGJ2013 - [C:\\Users\\Administrator.PC-201411271608NRHM\\Desktop\\白龙村-2016-08-25-13-27-07(2166版)_16G.GGJ12]"}</TitleText>
        <WindowButtons>
          {["M1 8.500h10", "M1.500 4.500h7v7h-7zM3.500 4.500v-2h7v7h-2", "M1 2l10 10M11 2L1 12"].map((d, i) => (
            <button key={i} aria-label={["最小化", "还原", "关闭"][i]}>
              <svg width="16" height="14" viewBox="-2 0 16 14"><path d={d} fill="none" stroke="#777" /></svg>
            </button>
          ))}
        </WindowButtons>
      </TitleBar>

      <Bar $h={30} $plain>
        <Menu>{menus.map((m) => <MenuButton key={m}>{m}</MenuButton>)}</Menu>
        <Cluster $w={153} $l={3} $gap={8}>
          <T i="docPlus" t="新建变更" arrow={4} />
          <T i="mascot" t="广小二" />
        </Cluster>
        <Notice>多边形数据未定义或相..</Notice>
        <Cluster $l={7} $r={4} $gap={9}>
          <T i="user" t="13907298339" arrow={3} />
          <span>造价豆:0</span>
          <Icon n="bell" />
          <Push />
          <High><More /></High>
        </Cluster>
      </Bar>

      <Bar $h={30}>
        <Cluster $w={151} $l={4} $r={3} $gap={7}>
          <T i="newDoc" />
          <T i="open" arrow={3} />
          <T i="save" />
          <Sep />
          <T i="undo" arrow={4} />
          <Push />
          <High><More /></High>
        </Cluster>
        <Cluster $w={550} $l={6} $r={4}>
          <T i="pencil" t="绘图" />
          <T i="sigma" t="汇总计算" />
          <T i="cloud" t="云检查" />
          <T off i="slab" t="平齐板顶" />
          <T off i="binoc" t="查找图元" />
          <T off i="glasses" t="查看钢筋量" />
          <T off i="batch" t="批量选择" />
          <Push />
          <High><More /></High>
        </Cluster>
        <Cluster $l={4} $r={4}>
          <T off $boxed i="flat" t="二维" arrow={5} />
          <T off i="cube" t="俯视" arrow={3} />
          <T off i="orbit" t="动态观察" />
          <T off i="part3d" t="局部三维" />
          <Sep />
          <T off i="full" t="全屏" />
          <T off i="zoomI" t="缩放" arrow={3} />
          <T off i="pan" t="平移" arrow={2} />
          <T off i="rotate" t="屏幕旋转" arrow={1} />
          <Sep />
          <T off i="floors" t="选择楼层" />
          <Push />
          <High><More /></High>
        </Cluster>
      </Bar>

      <Workspace>
        <Nav>
          <NavHead>模块导航栏<HeadIcons><Icon n="pin" s={14} /><CloseBox aria-label="关闭"><Icon n="close" s={14} /></CloseBox></HeadIcons></NavHead>
          <NavButton>工程设置</NavButton>
          <NavButton>绘图输入</NavButton>
          <NavTools><Icon n="plus2" /><Icon n="minus2" /></NavTools>
          <TreeBox>
            <Tree>
              {navTree.map((g) => (
                <React.Fragment key={g.name}>
                  <Row>
                    <Chevron><Icon n={g.closed ? "chevR" : "chevD"} /></Chevron>
                    <Stub />
                    <Icon n={g.closed ? "folder" : "folderOpen"} />
                    <Label>{g.name}</Label>
                  </Row>
                  {g.items.map(([ic, name, on], i) => (
                    <Row key={name}>
                      <Trunk $off={g.end} />
                      <Elbow $last={i === g.items.length - 1} />
                      <Picked $on={on}><Icon n={ic} /><Label><Song>{name}</Song></Label></Picked>
                      {on && <><Icon n="cols" s={15} /><NewTag>NEW</NewTag></>}
                    </Row>
                  ))}
                </React.Fragment>
              ))}
            </Tree>
            <Scroll>
              <Icon n="chevU" />
              <Track $n={180} />
              <Track $n={270} $thumb />
              <Icon n="chevD" />
            </Scroll>
          </TreeBox>
          <NavButton>单构件输入</NavButton>
          <NavButton>报表预览</NavButton>
        </Nav>

        <Middle>
          <Bar $h={27}>
            <Cluster $l={8} $gap={6}>
              <T i="add" t="新建" arrow={1} />
              <T i="del" t="删除" />
              <T i="copy" t="复制" />
              <T i="rename" t="重命名" />
              <ComboBox>
                <Sep />
                楼层
                <ComboFace>
                  <FloorSelect defaultValue="4"><option value="4">第4层</option></FloorSelect>
                  <Arrow />
                </ComboFace>
                <Sep />
              </ComboBox>
              <T i="sort" t="排序" arrow={1} />
              <T i="filter" t="过滤" />
            </Cluster>
          </Bar>
          <Columns>
            <ListPane>
              <SearchRow onSubmit={(e) => e.preventDefault()}>
                <SearchInput placeholder="搜索构件..." aria-label="搜索构件" />
                <SearchButton aria-label="搜索"><Icon n="find" /></SearchButton>
              </SearchRow>
              <ListBox>
                <Row><Icon n="chevD" /><Stub /><Icon n="lineBox" /><Label>自定义线</Label></Row>
                {eleven.slice(1).map((n) => (
                  <Row key={n}>
                    <ListElbow $last={n === 10} />
                    <ListItem $on={n === 1}><Icon n="gear" s={12} /><Half>ZDYX-{n}</Half></ListItem>
                  </Row>
                ))}
              </ListBox>
            </ListPane>
            <Props>
              <TabStrip><Tab $on $w={62}>属性编辑</Tab></TabStrip>
              <PropBody>
                <PropFrame>
                  <Table>
                    <colgroup><col width="21" /><col width="191" /><col width="124" /></colgroup>
                    <thead>
                      <tr><Th $top /><Th $top>属性名称</Th><Th $top $bg="linear-gradient(#f7d99d, #f0bd5c)" /></tr>
                    </thead>
                    <tbody>
                      {props.map(([n, name, val, c, kind]) => {
                        const first = n === "1";
                        const branch = kind === "b" || kind === "e";
                        return (
                          <tr key={n}>
                            <Th $bg={first ? "#fbcd82" : undefined}>{n}</Th>
                            <Td $l={branch ? 8 : kind ? 2 : 20} $c={c || "#000"} $bg={first ? "#0078d7" : undefined}>
                              <Cell>
                                {branch ? <Branch $last={kind === "e"} /> : kind ? <Fold open={kind === "-"} /> : null}
                                <span><Song>{name}</Song></span>
                              </Cell>
                            </Td>
                            <Td $c={c === gray ? gray : "#000"} $bg={first ? "#dcebfa" : undefined}><Song>{val}</Song></Td>
                          </tr>
                        );
                      })}
                    </tbody>
                  </Table>
                </PropFrame>
              </PropBody>
            </Props>
          </Columns>
        </Middle>

        <Dialog>
          <DialogTitle>截面编辑</DialogTitle>
          <DialogBody>
            <TabStrip><Tab $on $w={44}>截面</Tab><Tab $w={38}>配筋</Tab></TabStrip>
            <Sheet>
              <ToolRow $gap={6}>
                <Grip />
                <T i="grid" t="定义网格" />
                <Sep />
                <T off i="line" t="画直线" />
                <T off i="arc" t="画弧" />
                <T off i="circle" t="画圆" />
                <T $active i="del" t="清除多边形" />
                <Sep />
                <T i="undo" t="回退" />
                <Sep />
                <T i="import" t="导入" />
                <T i="export" t="导出" />
                <Sep />
                <T i="query" t="查询多边形库" />
              </ToolRow>
              <ToolRow $gap={2}>
                <Grip />
                <Radios>
                  <Radio><input type="radio" name="mode" defaultChecked />不偏移</Radio>
                  <Radio><input type="radio" name="mode" />正交</Radio>
                  <Radio><input type="radio" name="mode" />极坐标</Radio>
                </Radios>
                <Sep />
                <NumberField label="X" />
                <Tail $l={6} />
                <NumberField label="Y" />
              </ToolRow>
              <Canvas><Drawing /></Canvas>
              <DialogFoot><DynButton>动态输入</DynButton></DialogFoot>
            </Sheet>
            <DialogStatus><span>坐标 (X: -253 Y: 20</span><span>请选择下一点</span></DialogStatus>
          </DialogBody>
        </Dialog>
      </Workspace>

      <StatusBar>
        <StatusCell $w={148} />
        <StatusCell $w={78}><Song>层高:2.8m</Song></StatusCell>
        <StatusCell $w={98}><Song>底标高:10.27m</Song></StatusCell>
        <StatusCell $w={48}><Song>0</Song></StatusCell>
        <StatusCell>名称在当前层当前构件类型下不允许重名</StatusCell>
      </StatusBar>

      <TaskBar>
        <Start aria-label="开始">
          <svg width="16" height="16" viewBox="0 0 16 16"><path d="M0 2.500l7-1v6H0zM8 1.300L16 0v7.500H8zM0 8.500h7v6l-7-1zM8 8.500h8V16l-8-1.300z" fill="#fff" /></svg>
        </Start>
        <TaskSearch>
          <svg width="22" height="22" viewBox="0 0 22 22"><circle cx="11" cy="11" r="9" fill="none" stroke="#fff" strokeWidth="3" /></svg>
          <input placeholder="在这里输入你要搜索的内容" />
          <Icon n="micLine" />
        </TaskSearch>
        <Task $w={52}><Logo n="fan" /></Task>
        <Task><Logo n="ghost" /></Task>
        <Task $w={56}><Logo n="edge" /></Task>
        <Task><Logo n="store" /></Task>
        <Task><Logo n="files" /></Task>
        <Task $run><Logo n="red" /></Task>
        <Task $run><Logo n="blue" /></Task>
        <Task $on $w={48}><Logo n="ggj" /></Task>
        <Task $run><Logo n="note" /></Task>
        <Task $run><Logo n="e360" /></Task>
        <Tray>
          <TwoLine $w={66}><div>10%</div><div>CPU使用</div></TwoLine>
          <TrayIcons>
            <Icon n="chevW" /><Icon n="battery" /><Icon n="wifi" /><Icon n="sound" />
            <Cjk>中</Cjk>
            <Push /><Icon n="sogou" />
          </TrayIcons>
          <TwoLine $w={90}><div>21:02</div><div>2017/8/27</div></TwoLine>
          <Notify aria-label="通知">
            <svg width="26" height="24" viewBox="0 0 26 24">
              <path d="M1 1h16v12H9l-4 4v-4H1z" fill="#fff" />
              <path d="M4 4.500h10M4 7.500h10M4 10.500h7" stroke="#000" />
              <circle cx="16" cy="15.500" r="7.500" fill="#333" stroke="#777" />
              <text x="16" y="19.500" fill="#fff" fontSize="11" fontWeight="700" textAnchor="middle">8</text>
            </svg>
          </Notify>
        </Tray>
      </TaskBar>

      <ImeBar>
        <span>中</span>
        <span>°,</span>
        <Icon n="mic" /><Icon n="keyb" /><Icon n="person" /><Icon n="shirt" /><Icon n="wrench" />
      </ImeBar>
      <ImeLogo><Icon n="sogou" s={28} /></ImeLogo>
      <Badge>70</Badge>
      <Marks width="100%" height="100%" fill="none" stroke="#f00" strokeWidth="3">
        <ellipse cx="637" cy="124" rx="43" ry="32" />
        <ellipse cx="648" cy="660" rx="61" ry="39" />
        <path d="M583 90l12 4-12 3 4-3z" fill="#f00" strokeWidth="1" />
      </Marks>
    </Page>
  );
}
